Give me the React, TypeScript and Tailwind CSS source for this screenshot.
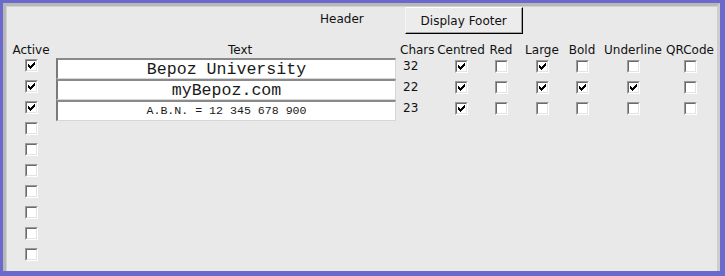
import React from "react";

type Line = {
  text: string;
  size: "big" | "small";
  chars: number;
  centred: boolean;
  red: boolean;
  large: boolean;
  bold: boolean;
  underline: boolean;
  qr: boolean;
};

const lines: Line[] = [
  { text: "Bepoz University", size: "big", chars: 32, centred: true, red: false, large: true, bold: false, underline: false, qr: false },
  { text: "myBepoz.com", size: "big", chars: 22, centred: true, red: false, large: true, bold: true, underline: true, qr: false },
  { text: "A.B.N. = 12 345 678 900", size: "small", chars: 23, centred: true, red: false, large: false, bold: false, underline: false, qr: false },
];

const cols = "grid grid-cols-[50px_340px_41px_48px_32px_50px_30px_72px_42px]";
const label = "font-['DejaVu_Sans',Tahoma,sans-serif] text-[12px] leading-[14px] text-[#111] whitespace-nowrap";

function Check({ checked }: { checked: boolean }) {
  return (
    <div className="w-[13px] h-[13px] border border-t-[#9a9a9a] border-l-[#9a9a9a] border-b-white border-r-white">
      <div className="w-full h-full border border-t-[#6a6a6a] border-l-[#6a6a6a] border-b-[#e3e3e3] border-r-[#e3e3e3] bg-white flex items-center justify-center">
        {checked && (
          <svg width="7" height="7" viewBox="0 0 7 7" shapeRendering="crispEdges">
            <path d="M6 0h1v3h-1v1h-1v1h-1v1h-1v1h-1v-1h-1v-1h-1v-3h1v1h1v1h1v-1h1v-1h1z" fill="#000" />
          </svg>
        )}
      </div>
    </div>
  );
}

function Cell({ children }: { children?: React.ReactNode }) {
  return <div className="flex justify-center pt-[2px]">{children}</div>;
}

export default function App() {
  const empty = Array.from({ length: 7 });
  return (
    <div className="w-[725px] h-[276px] bg-[#6a6acd] pl-[3px] pt-[3px] pr-[5px] pb-[5px]">
      <div className="w-full h-full bg-[#e9e9e9] border-t-[3px] border-l-[3px] border-t-[#b8b8b8] border-l-[#b8b8b8] border-r-[3px] border-r-[#cdcdcd] shadow-[inset_1px_1px_0_#d2d2d2]">
        <div className="h-[37px] flex items-start pl-[314px]">
          <span className={`${label} mt-[6px]`}>Header</span>
          <button className="ml-[41px] mt-[1px] w-[118px] h-[27px] bg-[#ececec] border-t border-l border-t-white border-l-[#f4f4f4] border-r border-b border-r-black border-b-black shadow-[inset_-1px_-1px_0_#a0a0a0] flex items-center justify-center">
            <span className={label}>Display Footer</span>
          </button>
        </div>

        <div className={`${cols} h-[15px]`}>
          <div className={`${label} text-center`}>Active</div>
          <div className={`${label} pl-[172px]`}>Text</div>
          <div className={`${label} pl-[4px]`}>Chars</div>
          <div className={`${label} flex justify-center`}>Centred</div>
          <div className={`${label} flex justify-center`}>Red</div>
          <div className={`${label} flex justify-center`}>Large</div>
          <div className={`${label} flex justify-center`}>Bold</div>
          <div className={`${label} flex justify-center`}>Underline</div>
          <div className={`${label} flex justify-center`}>QRCode</div>
        </div>

        {lines.map((l) => (
          <div key={l.text} className={`${cols} h-[21px]`}>
            <div className="flex justify-center pt-[1px]">
              <Check checked />
            </div>
            <div className="h-[21px] bg-white border-t-2 border-l-2 border-t-[#8a8a8a] border-l-[#7a7a7a] border-b border-r border-b-[#d6d6d6] border-r-[#d6d6d6] flex items-center justify-center overflow-hidden">
              <span
                className={`font-['Liberation_Mono','Courier_New',monospace] text-[#1a1a1a] whitespace-pre ${
                  l.size === "big" ? "text-[16.6px] leading-[18px] pt-[2px]" : "text-[11.6px] leading-[14px]"
                }`}
              >
                {l.text}
              </span>
            </div>
            <div className={`${label} pl-[7px] pt-[1px]`}>{l.chars}</div>
            <Cell><Check checked={l.centred} /></Cell>
            <Cell><Check checked={l.red} /></Cell>
            <Cell><Check checked={l.large} /></Cell>
            <Cell><Check checked={l.bold} /></Cell>
            <Cell><Check checked={l.underline} /></Cell>
            <Cell><Check checked={l.qr} /></Cell>
          </div>
        ))}

        {empty.map((_, i) => (
          <div key={i} className={`${cols} h-[21px]`}>
            <div className="flex justify-center pt-[1px]">
              <Check checked={false} />
            </div>
          </div>
        ))}
      </div>
    </div>
  );
}
